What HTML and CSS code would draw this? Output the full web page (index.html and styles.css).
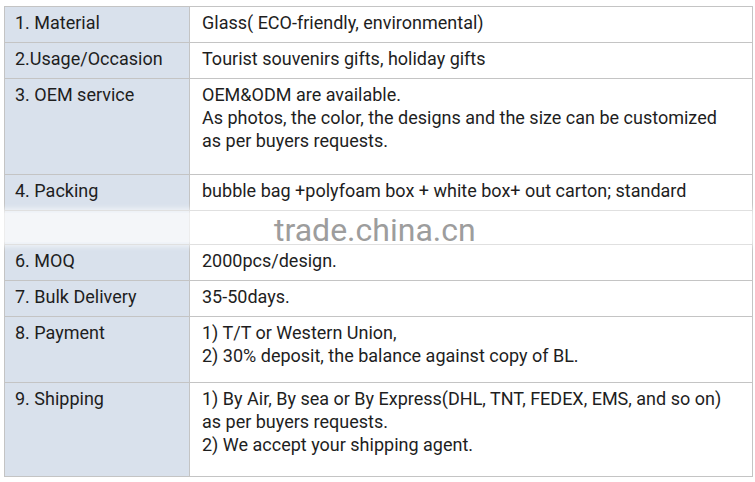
FILE: index.html
```html
<!DOCTYPE html>
<html>
<head>
<meta charset="utf-8">
<link rel="stylesheet" href="styles.css">
</head>
<body>
<div class="wrap">
<table class="spec">
  <tr><td class="k">1. Material</td><td class="v">Glass( ECO-friendly, environmental)</td></tr>
  <tr><td class="k">2.Usage/Occasion</td><td class="v">Tourist souvenirs gifts, holiday gifts</td></tr>
  <tr class="r3"><td class="k">3. OEM service</td><td class="v">OEM&amp;ODM are available.<br>As photos, the color, the designs and the size can be customized as per buyers requests.</td></tr>
  <tr><td class="k">4. Packing</td><td class="v">bubble bag +polyfoam box + white box+ out carton; standard</td></tr>
  <tr class="r5"><td class="k"></td><td class="v"></td></tr>
  <tr><td class="k">6. MOQ</td><td class="v">2000pcs/design.</td></tr>
  <tr><td class="k">7. Bulk Delivery</td><td class="v">35-50days.</td></tr>
  <tr class="r8"><td class="k">8. Payment</td><td class="v">1) T/T or Western Union,<br>2) 30% deposit, the balance against copy of BL.</td></tr>
  <tr class="r9"><td class="k">9. Shipping</td><td class="v">1) By Air, By sea or By Express(DHL, TNT, FEDEX, EMS, and so on) as per buyers requests.<br>2) We accept your shipping agent.</td></tr>
</table>
<div class="watermark"><span>trade.china.cn</span></div>
</div>
</body>
</html>
```
FILE: styles.css
```css
html, body {
  margin: 0;
  padding: 0;
  background: #ffffff;
}
.wrap {
  position: relative;
  padding: 6px 0 0 4px;
}
.spec {
  border-collapse: collapse;
  width: 749px;
  table-layout: fixed;
  font-family: Roboto, "Liberation Sans", Arial, sans-serif;
  font-size: 18px;
  line-height: 23px;
  color: #1e1e1e;
}
.spec td {
  border: 1px solid #c4c4c4;
  vertical-align: top;
  padding: 4px 10px 8px 11px;
}
.spec td.k {
  width: 164px;
  background: #d9e1ec;
  padding-left: 10px;
}
.spec td.v {
  background: #ffffff;
  padding-left: 12px;
  padding-right: 20px;
}
.r3 td { height: 83px; }
.r5 td { height: 21px; }
.r8 td { height: 53px; }
.r9 td { height: 81px; }
.watermark {
  position: absolute;
  left: 0;
  top: 213px;
  width: 751px;
  height: 29px;
  background: rgba(255, 255, 255, 0.7);
  box-shadow: 0 0 6px 4px rgba(255, 255, 255, 0.7);
  font-family: Roboto, "Liberation Sans", Arial, sans-serif;
  font-size: 32px;
  line-height: 32px;
  color: #9d9d9d;
}
.watermark span {
  position: absolute;
  left: 274px;
  top: 1px;
}
```
